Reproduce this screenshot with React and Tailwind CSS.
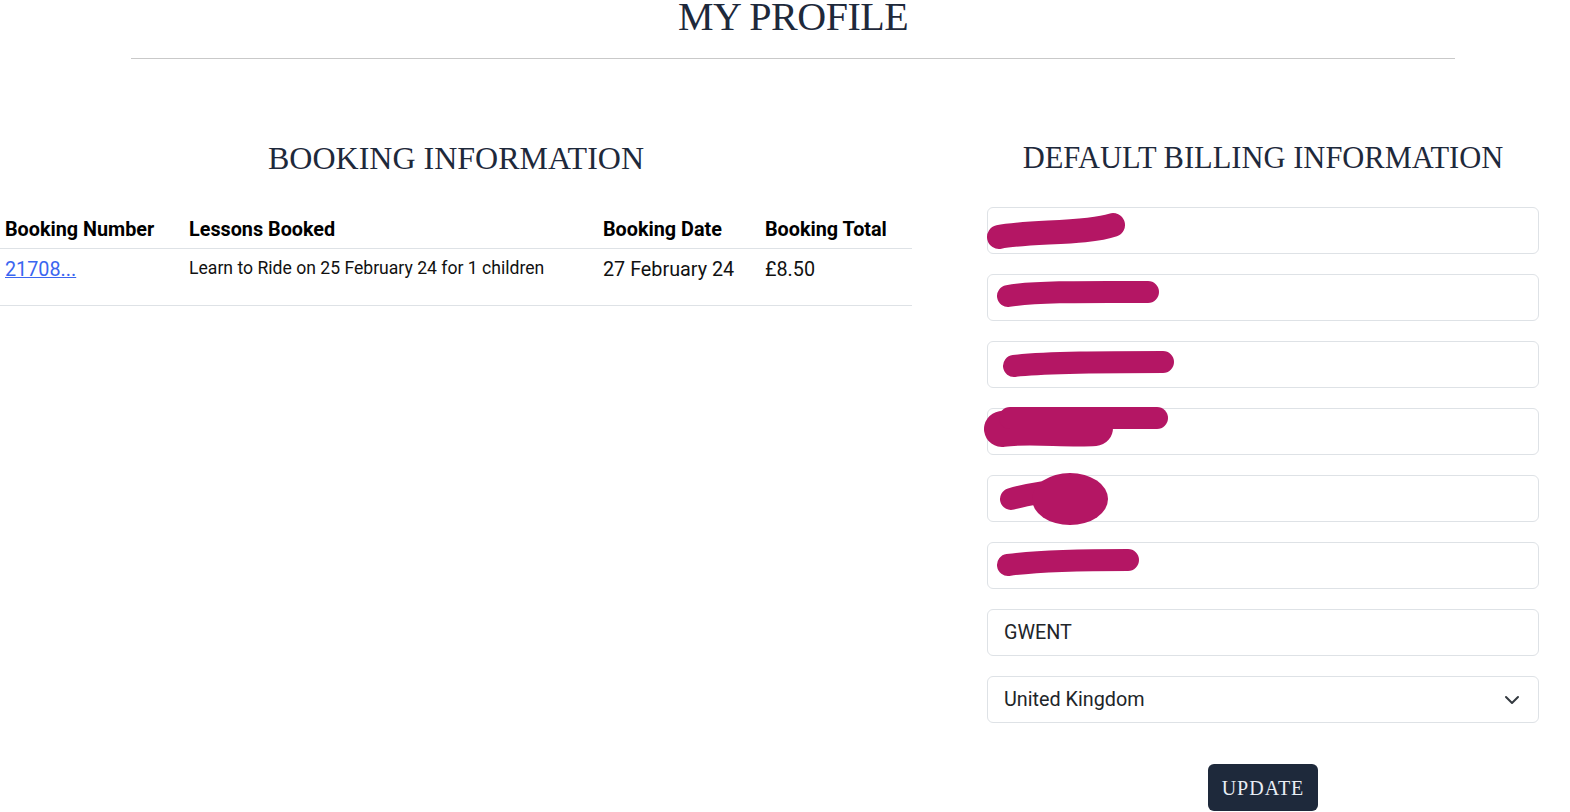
import React from "react";

const serif = { fontFamily: '"Liberation Serif", serif' };

const scribbles = [
  <path key="a" d="M12 30 C 40 24, 100 27, 126 18" strokeWidth="24" />,
  <path key="b" d="M21 22 C 50 17, 110 18, 161 18" strokeWidth="22" />,
  <path key="c" d="M27 25 C 60 21, 120 21, 176 21" strokeWidth="22" />,
  <g key="d">
    <path d="M15 21 C 40 17, 80 22, 108 20" strokeWidth="36" />
    <path d="M23 10 L 170 10" strokeWidth="22" />
  </g>,
  <g key="e">
    <path d="M24 24 C 45 18, 70 15, 88 13" strokeWidth="22" />
    <ellipse cx="83" cy="24" rx="38" ry="26" stroke="none" />
  </g>,
  <path key="f" d="M21 23 C 50 19, 100 18, 141 18" strokeWidth="22" />,
];

function Field({ children, scribble }) {
  return (
    <div className="relative h-[47px] rounded-md border border-[#dee2e6] bg-white px-4 flex items-center text-[19.8px] text-[#212529]">
      {children}
      {scribble && (
        <svg
          className="absolute left-[-1px] top-[-1px] overflow-visible"
          width="200"
          height="47"
          fill="#b41664"
          stroke="#b41664"
          strokeLinecap="round"
        >
          {scribble}
        </svg>
      )}
    </div>
  );
}

export default function App() {
  return (
    <div className="min-h-[812px] bg-white overflow-hidden" style={{ fontFamily: "Roboto, sans-serif" }}>
      <h1
        className="mt-[-3px] ml-[131px] w-[1324px] text-center text-[40px] leading-none text-[#1e293b] tracking-[-0.5px]"
        style={serif}
      >
        MY PROFILE
      </h1>
      <hr className="mt-[21px] ml-[131px] w-[1324px] border-0 border-t border-[#c9c9c9]" />

      <div className="mt-[83px] flex">
        <div className="w-[912px]">
          <h2 className="text-center text-[32px] leading-none text-[#1e293b]" style={serif}>
            BOOKING INFORMATION
          </h2>
          <table className="mt-[33px] w-[912px] table-fixed border-collapse text-black">
            <colgroup>
              <col className="w-[184px]" />
              <col className="w-[414px]" />
              <col className="w-[162px]" />
              <col className="w-[152px]" />
            </colgroup>
            <thead>
              <tr className="border-b border-[#dee2e6]">
                <th className="px-[5px] pt-[10px] pb-[5px] text-left text-[19.8px] leading-[26px] font-bold">Booking Number</th>
                <th className="px-[5px] pt-[10px] pb-[5px] text-left text-[19.8px] leading-[26px] font-bold">Lessons Booked</th>
                <th className="px-[5px] pt-[10px] pb-[5px] text-left text-[19.8px] leading-[26px] font-bold">Booking Date</th>
                <th className="px-[5px] pt-[10px] pb-[5px] text-left text-[19.8px] leading-[26px] font-bold">Booking Total</th>
              </tr>
            </thead>
            <tbody>
              <tr className="border-b border-[#dee2e6] align-top">
                <td className="px-[5px] pt-[8px] pb-[22px] text-[19.8px] leading-[26px]">
                  <a href="#" className="text-[#3b66f0] underline">21708...</a>
                </td>
                <td className="px-[5px] pt-[8px] pb-[22px] text-[17.6px] leading-[22px] text-[#111]">
                  Learn to Ride on 25 February 24 for 1 children
                </td>
                <td className="px-[5px] pt-[8px] pb-[22px] text-[19.8px] leading-[26px] text-[#111]">27 February 24</td>
                <td className="px-[5px] pt-[8px] pb-[22px] text-[19.8px] leading-[26px] text-[#111]">£8.50</td>
              </tr>
            </tbody>
          </table>
        </div>

        <div className="ml-[75px] w-[552px]">
          <h2 className="text-center text-[30.5px] leading-[32px] text-[#1e293b]" style={serif}>
            DEFAULT BILLING INFORMATION
          </h2>
          <div className="mt-[33px] flex flex-col gap-[20px]">
            {scribbles.map((s, i) => (
              <Field key={i} scribble={s} />
            ))}
            <Field>GWENT</Field>
            <Field>
              <span className="flex-1">United Kingdom</span>
              <svg width="16" height="16" viewBox="0 0 16 16" fill="none" stroke="#343a40" strokeWidth="2" strokeLinecap="round" strokeLinejoin="round" className="mr-[2px]">
                <path d="M2 5l6 6 6-6" />
              </svg>
            </Field>
          </div>
          <div className="mt-[41px] flex justify-center">
            <button
              type="button"
              className="h-[47px] w-[110px] rounded-md bg-[#1e293b] text-[20px] text-[#e8edf5] tracking-[1px]"
              style={serif}
            >
              UPDATE
            </button>
          </div>
        </div>
      </div>
    </div>
  );
}
